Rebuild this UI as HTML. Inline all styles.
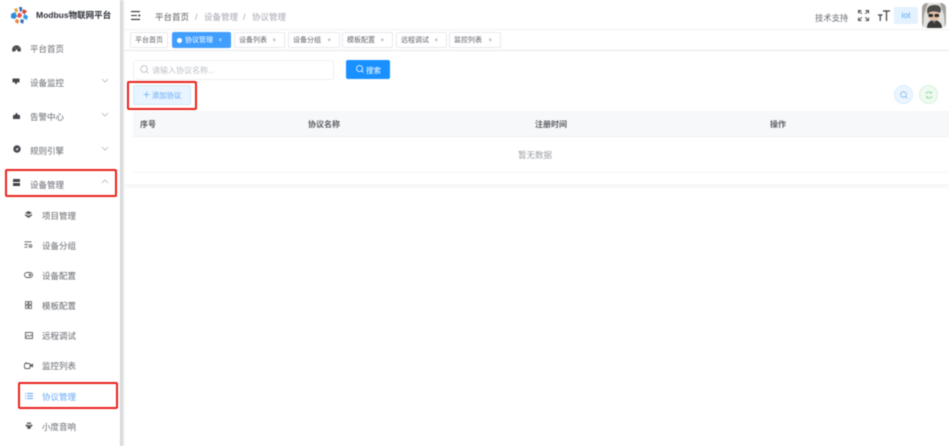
<!DOCTYPE html>
<html lang="zh">
<head>
<meta charset="utf-8">
<title>Modbus物联网平台</title>
<style>
html,body{margin:0;padding:0;background:#fff;}
body{width:949px;height:446px;overflow:hidden;position:relative;font-family:"Liberation Sans","Noto Sans CJK SC",sans-serif;color:#606266;}
#p{position:absolute;left:0;top:0;width:949px;height:446px;overflow:hidden;filter:blur(.45px);}
.a{position:absolute;white-space:nowrap;}
.m{position:absolute;left:30px;font-size:8.500px;line-height:14px;color:#66696f;white-space:nowrap;}
.s{position:absolute;left:42px;font-size:8.500px;line-height:14px;color:#66696f;white-space:nowrap;}
.ic{position:absolute;overflow:visible;}
.chev{position:absolute;left:101px;width:8px;height:5px;}
.t{position:absolute;top:32px;height:16px;box-sizing:border-box;border:1px solid #e8eaee;border-radius:2px;background:#fff;font-size:7px;line-height:15px;color:#5f6268;padding-left:4px;white-space:nowrap;}
.t i{position:absolute;right:8px;top:1px;font-style:normal;font-size:6px;color:#888;}
.red{position:absolute;box-sizing:border-box;border:2px solid #e8231c;border-radius:2px;}
.th{position:absolute;top:119px;font-size:8px;line-height:12px;font-weight:bold;color:#5a5d63;white-space:nowrap;}
</style>
</head>
<body>
<div id="p">
<!-- sidebar -->
<div class="a" style="left:0;top:0;width:120px;height:446px;background:#fff;"></div>
<div class="a" style="left:120px;top:0;width:5px;height:446px;background:linear-gradient(90deg,#d4d5d7,#dcdddf 50%,#f6f6f7 85%,#fff);"></div>

<!-- logo -->
<svg class="ic" style="left:10px;top:7px" width="19" height="18" viewBox="0 0 19 18">
<path d="M1 7l4-2 2 4-2 3-4-1z" fill="#2b8ed6"/>
<path d="M4 2l3-1 1 3-2 2z" fill="#e8a13a"/>
<path d="M9 0l3 0 0 4-2 1z" fill="#2b6fc2"/>
<path d="M13 2l4 2-2 3-3-1z" fill="#d9483b"/>
<path d="M14 7l4 2-1 4-4-2z" fill="#2f9fe3"/>
<path d="M11 12l3 1-1 4-3-2z" fill="#2f6fc4"/>
<path d="M6 12l3 1-1 4-3-2z" fill="#e8873a"/>
<path d="M8 6l3 0 1 3-2 2-3-1z" fill="#e2574c"/>
</svg>
<div class="a" style="left:36px;top:8px;font-size:8.500px;line-height:14px;font-weight:bold;color:#2b2f36;">Modbus物联网平台</div>

<!-- main menu -->
<svg class="ic" style="left:12px;top:45px" width="9" height="7" viewBox="0 0 9 7"><path d="M.2 6.500V4.500a4.300 4.300 0 0 1 8.600 0v2H6L4.500 4 3 6.500z" fill="#45484d"/><path d="M2.500 2.500l1 1M6.500 2.500l-1 1" stroke="#fff" stroke-width=".5"/></svg>
<div class="m" style="top:42px;">平台首页</div>

<svg class="ic" style="left:12px;top:78px" width="8" height="7" viewBox="0 0 9 8"><path d="M.5.500h8v4.500h-3v2h-2V5h-3z" fill="#45484d"/></svg>
<div class="m" style="top:76px;">设备监控</div>
<svg class="chev" style="top:78px" viewBox="0 0 8 5"><path d="M1 1l3 3 3-3" fill="none" stroke="#b4b7bc" stroke-width=".8"/></svg>

<svg class="ic" style="left:13px;top:112px" width="7" height="7" viewBox="0 0 7 7"><path d="M0 7V3.500l1.500-1v1l2-3 2 3v-1L7 3.500V7z" fill="#45484d"/></svg>
<div class="m" style="top:110px;">告警中心</div>
<svg class="chev" style="top:112px" viewBox="0 0 8 5"><path d="M1 1l3 3 3-3" fill="none" stroke="#b4b7bc" stroke-width=".8"/></svg>

<svg class="ic" style="left:13px;top:145px" width="8" height="8" viewBox="0 0 8 8"><circle cx="4" cy="4" r="3.700" fill="#45484d"/><path d="M2.500 4.500L5.500 2.500 4.500 5.500z" fill="#fff"/></svg>
<div class="m" style="top:144px;">规则引擎</div>
<svg class="chev" style="top:146px" viewBox="0 0 8 5"><path d="M1 1l3 3 3-3" fill="none" stroke="#b4b7bc" stroke-width=".8"/></svg>

<svg class="ic" style="left:13px;top:179px" width="7" height="7" viewBox="0 0 7 7"><path d="M0 0h7v3H0zM0 4h7v3H0z" fill="#3f4246"/></svg>
<div class="m" style="top:178px;">设备管理</div>
<svg class="chev" style="top:179px" viewBox="0 0 8 5"><path d="M1 4l3-3 3 3" fill="none" stroke="#b4b7bc" stroke-width=".8"/></svg>

<!-- submenu -->
<svg class="ic" style="left:25px;top:211px" width="7" height="7" viewBox="0 0 7 7"><path d="M3.500 0L7 1.800 3.500 3.600 0 1.800zM0 3l3.500 1.800L7 3v1.500L3.500 7 0 4.500z" fill="#55585d"/></svg>
<div class="s" style="top:209px;">项目管理</div>

<svg class="ic" style="left:24px;top:241px" width="9" height="7" viewBox="0 0 9 7"><path d="M.5 .8h7M.5 3.500h3.500M.5 6.200h3" fill="none" stroke="#55585d" stroke-width=".9"/><circle cx="6.500" cy="5" r="1.300" fill="none" stroke="#55585d" stroke-width=".9"/></svg>
<div class="s" style="top:239px;">设备分组</div>

<svg class="ic" style="left:24px;top:272px" width="9" height="6" viewBox="0 0 9 6"><rect x=".5" y=".5" width="8" height="5" rx="2.500" fill="none" stroke="#55585d" stroke-width=".9"/><circle cx="6" cy="3" r="1.200" fill="#55585d"/></svg>
<div class="s" style="top:269px;">设备配置</div>

<svg class="ic" style="left:25px;top:301px" width="7" height="8" viewBox="0 0 7 8"><path d="M.5.500h2.500v3H.5zM4 .500h2.500v3H4zM.5 4.500h2.500v3H.5zM4 4.500h2.500v3H4z" fill="none" stroke="#55585d" stroke-width=".8"/></svg>
<div class="s" style="top:299px;">模板配置</div>

<svg class="ic" style="left:25px;top:332px" width="8" height="7" viewBox="0 0 8 7"><rect x=".5" y=".5" width="7" height="6" fill="none" stroke="#55585d" stroke-width=".9"/><path d="M1 5l2-2 1.500 1.500L6 3l1 1" fill="none" stroke="#55585d" stroke-width=".7"/></svg>
<div class="s" style="top:329px;">远程调试</div>

<svg class="ic" style="left:24px;top:362px" width="9" height="7" viewBox="0 0 9 7"><rect x=".5" y="1.500" width="5.500" height="5" rx="1" fill="none" stroke="#55585d" stroke-width=".9"/><path d="M6 3l3-1.500v4L6 4z" fill="#55585d"/><circle cx="2" cy="1" r=".8" fill="#55585d"/></svg>
<div class="s" style="top:359px;">监控列表</div>

<svg class="ic" style="left:25px;top:393px" width="8" height="6" viewBox="0 0 8 6"><path d="M0 .5h1M2 .5h6M0 3h1M2 3h6M0 5.500h1M2 5.500h6" fill="none" stroke="#5aa5f5" stroke-width=".9"/></svg>
<div class="s" style="top:390px;color:#62a9f7;">协议管理</div>

<svg class="ic" style="left:25px;top:422px" width="8" height="8" viewBox="0 0 8 8"><circle cx="4" cy="5" r="2" fill="#55585d"/><circle cx="1.500" cy="3.500" r="1" fill="#55585d"/><circle cx="6.500" cy="3.500" r="1" fill="#55585d"/><circle cx="3" cy="1.300" r="1" fill="#55585d"/><circle cx="5" cy="1.300" r="1" fill="#55585d"/></svg>
<div class="s" style="top:420px;">小度音响</div>

<!-- red boxes in sidebar -->
<div class="red" style="left:5px;top:169px;width:112px;height:28px;"></div>
<div class="red" style="left:18px;top:382px;width:100px;height:27px;"></div>

<!-- header -->
<svg class="ic" style="left:131px;top:11px" width="10" height="9" viewBox="0 0 10 9"><path d="M0 .6h9M0 4.500h6M0 8.400h9" fill="none" stroke="#2f3236" stroke-width="1.100"/><path d="M7.500 3.200L10 4.500 7.500 5.800z" fill="#2f3236"/></svg>
<div class="a" style="left:155px;top:10px;font-size:8.500px;line-height:14px;color:#5a5d63;">平台首页</div>
<div class="a" style="left:195px;top:10px;font-size:9px;line-height:14px;color:#a8abb2;">/</div>
<div class="a" style="left:204px;top:10px;font-size:8.500px;line-height:14px;color:#a3a6ad;">设备管理</div>
<div class="a" style="left:243px;top:10px;font-size:9px;line-height:14px;color:#a8abb2;">/</div>
<div class="a" style="left:252px;top:10px;font-size:8.500px;line-height:14px;color:#a3a6ad;">协议管理</div>

<div class="a" style="left:815px;top:11px;font-size:8.300px;line-height:14px;color:#6b6e74;">技术支持</div>
<svg class="ic" style="left:858px;top:10px" width="11" height="11" viewBox="0 0 11 11"><path d="M.5 3.500V.5h3M.8.8l3 3M7.500.5h3v3M10.200.8l-3 3M.5 7.500v3h3M.8 10.200l3-3M7.500 10.500h3v-3M10.200 10.200l-3-3" fill="none" stroke="#4a4d52" stroke-width="1"/></svg>
<svg class="ic" style="left:878px;top:10px" width="12" height="11" viewBox="0 0 12 11"><path d="M5 1h7M8.500 1v10M0 5h4.500M2.250 5v6" fill="none" stroke="#3a3d42" stroke-width="1.200"/></svg>
<div class="a" style="left:894px;top:7px;width:24px;height:17px;background:#e4f1ff;border-radius:2px;text-align:center;font-size:8.500px;line-height:17px;color:#5aa5f5;">iot</div>
<!-- avatar -->
<svg class="ic" style="left:922px;top:3px" width="24" height="25" viewBox="0 0 24 25">
<rect width="24" height="25" rx="5" fill="#e3e1dd"/>
<path d="M0 5a5 5 0 0 1 5-5h1L2 12 1 25 0 20zM24 5a5 5 0 0 0-5-5h-1l4 12 1 13 1-5z" fill="#8a8782" opacity=".7"/>
<path d="M5 25c0-5 3-8 7-8s8 3 8 8z" fill="#3a3937"/>
<path d="M10 17l2 4 3-4z" fill="#6d6a66"/>
<ellipse cx="12" cy="12.500" rx="5.500" ry="5.500" fill="#e2bda6"/>
<path d="M5 8c0-5 4-6 8-6s6 2 6 5l-1 3c-4-2-8-2-11-.5L6 12z" fill="#4c4b49"/>
<rect x="6.500" y="11" width="4.500" height="3" rx="1" fill="#2a2a2a"/>
<rect x="12.500" y="11" width="4.500" height="3" rx="1" fill="#2a2a2a"/>
</svg>
<div class="a" style="left:124px;top:29px;width:825px;height:1px;background:#f1f2f4;"></div>

<!-- tabs -->
<div class="t" style="left:130px;width:38px;">平台首页</div>
<div class="t" style="left:172px;width:59px;background:#409eff;border-color:#409eff;color:#fff;padding-left:12px;">协议管理<i style="color:#fff;">×</i><span style="position:absolute;left:4px;top:5px;width:5px;height:5px;border-radius:50%;background:#fff;"></span></div>
<div class="t" style="left:234px;width:51px;">设备列表<i>×</i></div>
<div class="t" style="left:288px;width:52px;">设备分组<i>×</i></div>
<div class="t" style="left:342px;width:51px;">模板配置<i>×</i></div>
<div class="t" style="left:396px;width:51px;">远程调试<i>×</i></div>
<div class="t" style="left:449px;width:52px;">监控列表<i>×</i></div>
<div class="a" style="left:124px;top:50px;width:825px;height:1px;background:#e6e7ea;"></div>

<!-- search -->
<div class="a" style="left:133px;top:60px;width:201px;height:20px;box-sizing:border-box;border:1px solid #eef0f3;border-radius:3px;background:#fff;"></div>
<svg class="ic" style="left:140px;top:65px" width="9" height="9" viewBox="0 0 9 9"><circle cx="4" cy="4" r="3.300" fill="none" stroke="#b8bbc1" stroke-width=".8"/><path d="M6.500 6.500L8.500 8.500" stroke="#b8bbc1" stroke-width=".8"/></svg>
<div class="a" style="left:152px;top:64px;font-size:8px;line-height:14px;color:#bdc0c5;">请输入协议名称...</div>
<div class="a" style="left:346px;top:60px;width:44px;height:19px;background:#1890ff;border-radius:2px;"></div>
<svg class="ic" style="left:356px;top:65px" width="8" height="8" viewBox="0 0 8 8"><circle cx="3.500" cy="3.500" r="3" fill="none" stroke="#fff" stroke-width=".8"/><path d="M5.700 5.700L7.500 7.500" stroke="#fff" stroke-width=".8"/></svg>
<div class="a" style="left:366px;top:64px;font-size:7.500px;line-height:13px;color:#fff;">搜索</div>

<!-- add button -->
<div class="a" style="left:133px;top:85px;width:58px;height:20px;box-sizing:border-box;background:#e8f4ff;border:1px solid #d1e9ff;border-radius:2px;"></div>
<svg class="ic" style="left:143px;top:91px" width="7" height="7" viewBox="0 0 7 7"><path d="M3.500 .5v6M.5 3.500h6" stroke="#6fb2f5" stroke-width=".8"/></svg>
<div class="a" style="left:152px;top:89px;font-size:7.300px;line-height:13px;color:#62a9f7;">添加协议</div>
<div class="red" style="left:127px;top:81px;width:70px;height:29px;"></div>

<!-- round buttons -->
<div class="a" style="left:894px;top:85px;width:19px;height:19px;box-sizing:border-box;border-radius:50%;background:#ecf5ff;border:1px solid #d9ecff;"></div>
<svg class="ic" style="left:900px;top:91px" width="8" height="8" viewBox="0 0 8 8"><circle cx="3.500" cy="3.500" r="2.800" fill="none" stroke="#7fb5ee" stroke-width=".8"/><path d="M5.500 5.500L7.500 7.500" stroke="#7fb5ee" stroke-width=".8"/></svg>
<div class="a" style="left:919px;top:85px;width:19px;height:19px;box-sizing:border-box;border-radius:50%;background:#effaf1;border:1px solid #d8f2dc;"></div>
<svg class="ic" style="left:925px;top:91px" width="8" height="8" viewBox="0 0 8 8"><path d="M1 3a3 3 0 0 1 5.300-1M7 5a3 3 0 0 1-5.300 1" fill="none" stroke="#86d59a" stroke-width=".8"/><path d="M6.500.5v2H4.500M1.500 7.500v-2h2" fill="none" stroke="#86d59a" stroke-width=".6"/></svg>

<!-- table -->
<div class="a" style="left:133px;top:111px;width:816px;height:26px;background:#f7f8f9;border-bottom:1px solid #eff0f2;box-sizing:border-box;"></div>
<div class="th" style="left:140px;">序号</div>
<div class="th" style="left:308px;">协议名称</div>
<div class="th" style="left:535px;">注册时间</div>
<div class="th" style="left:770px;">操作</div>
<div class="a" style="left:518px;top:149px;font-size:8.500px;line-height:13px;color:#9a9da3;">暂无数据</div>
<div class="a" style="left:133px;top:172px;width:816px;height:1px;background:#f5f6f7;"></div>
<!-- card bottom shadow -->
<div class="a" style="left:125px;top:184px;width:824px;height:6px;background:linear-gradient(180deg,#fafafa,#f6f6f6 25%,#fcfcfc 70%,#fff);"></div>
</div>
</body>
</html>
